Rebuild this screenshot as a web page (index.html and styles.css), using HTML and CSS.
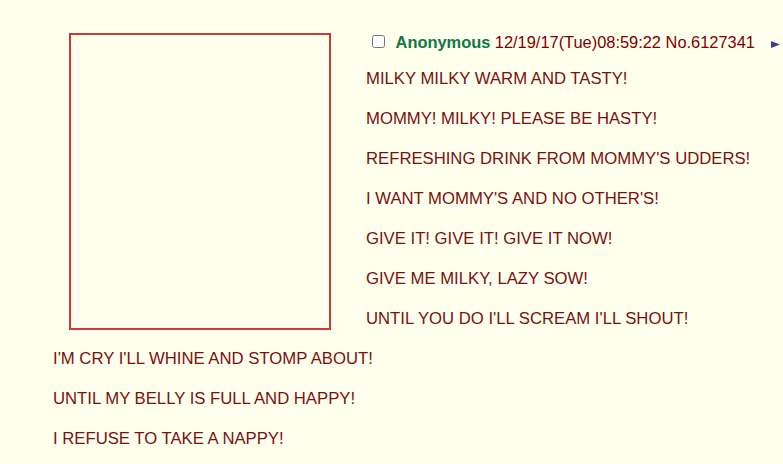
FILE: index.html
```html
<!DOCTYPE html>
<html>
<head>
  <title>Thread</title>
  <link rel="stylesheet" href="styles.css">
</head>
<body>
  <div class="thread">
    <div class="post">
      <a class="file-thumb" href="#"></a>
      <div class="post-info">
        <input type="checkbox" class="post-check">
        <span class="name">Anonymous</span>
        <span class="date">12/19/17(Tue)08:59:22</span>
        <span class="post-num">No.6127341</span>
        <a class="menu-btn" href="#"><svg width="9" height="7" viewBox="0 0 9 7"><polygon points="0,0 9,3.5 0,7" fill="#3a3f8f"/></svg></a>
      </div>
      <blockquote class="post-message">
        MILKY MILKY WARM AND TASTY!<br><br>
        MOMMY! MILKY! PLEASE BE HASTY!<br><br>
        REFRESHING DRINK FROM MOMMY'S UDDERS!<br><br>
        I WANT MOMMY'S AND NO OTHER'S!<br><br>
        GIVE IT! GIVE IT! GIVE IT NOW!<br><br>
        GIVE ME MILKY, LAZY SOW!<br><br>
        UNTIL YOU DO I'LL SCREAM I'LL SHOUT!<br><br>
        I'M CRY I'LL WHINE AND STOMP ABOUT!<br><br>
        UNTIL MY BELLY IS FULL AND HAPPY!<br><br>
        I REFUSE TO TAKE A NAPPY!
      </blockquote>
    </div>
  </div>
</body>
</html>
```

FILE: styles.css
```css
body {
  font-family: "Liberation Sans", Arial, sans-serif;
  font-size: 16px;
  line-height: 20px;
  background-color: #ffffee;
  color: #800000;
  margin: 0;
  padding: 0;
}
.thread {
  padding: 32px 0 0 53px;
}
.file-thumb {
  float: left;
  display: block;
  width: 258px;
  height: 293px;
  border: 2px solid #cc3b35;
  margin: 1px 35px 10px 16px;
}
.post-info {
  white-space: nowrap;
  font-size: 16.4px;
}
.post-check {
  width: 13px;
  height: 13px;
  margin: 3px 6px 3px 6px;
  vertical-align: baseline;
}
.name {
  color: #117743;
  font-weight: bold;
}
.menu-btn {
  margin-left: 12px;
  text-decoration: none;
}
.menu-btn svg {
  vertical-align: baseline;
}
.post-message {
  margin: 17px 0 0 0;
  font-size: 16.7px;
  color: #7a1010;
}
```
